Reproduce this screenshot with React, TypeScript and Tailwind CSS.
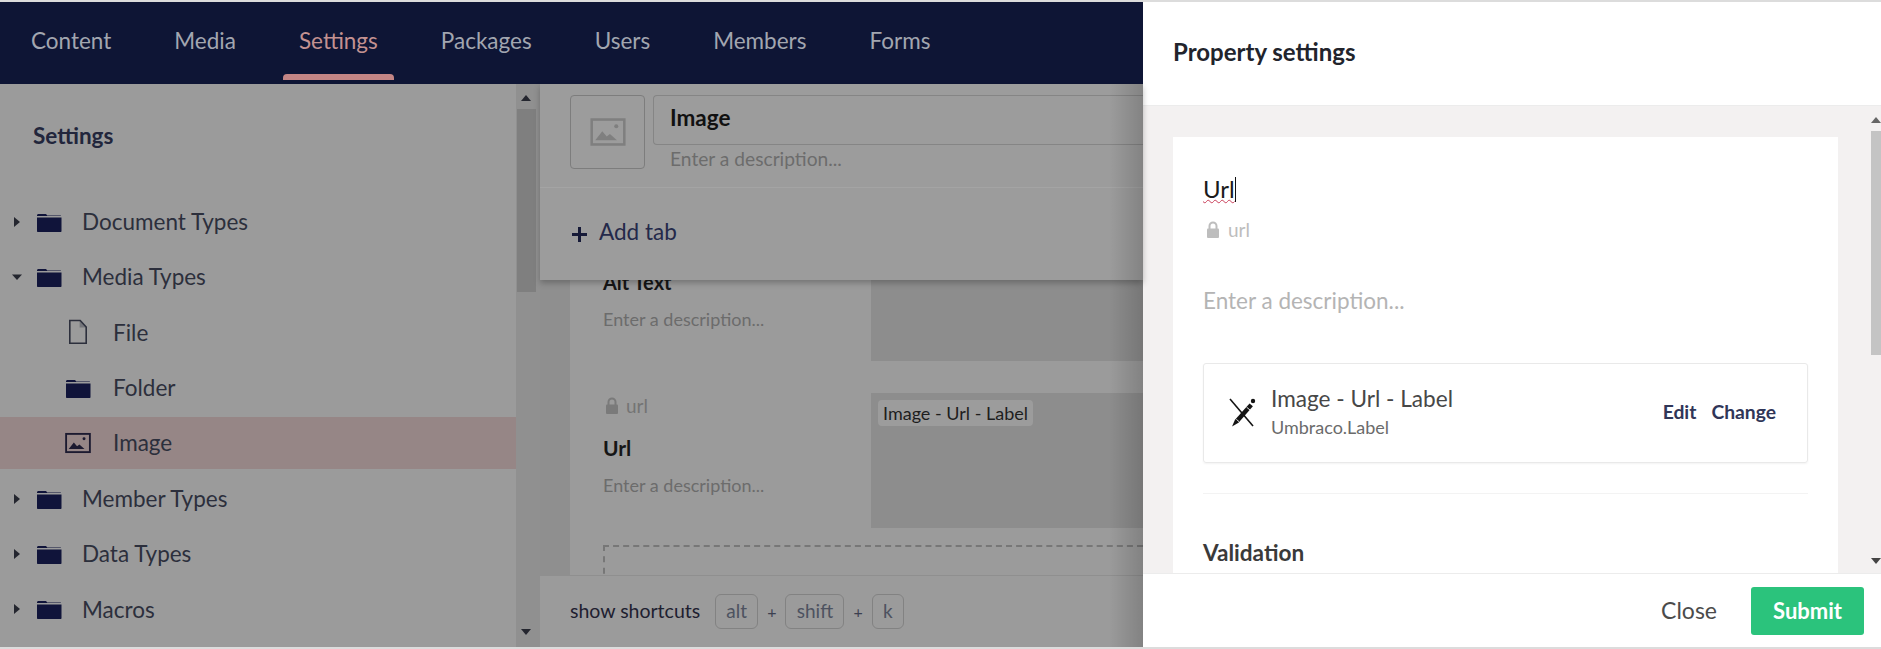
import React from 'react';

const navItems = [
  { label: 'Content', active: false },
  { label: 'Media', active: false },
  { label: 'Settings', active: true },
  { label: 'Packages', active: false },
  { label: 'Users', active: false },
  { label: 'Members', active: false },
  { label: 'Forms', active: false },
];

const FolderIcon = () => (
  <svg width="26" height="24" viewBox="0 0 26 24" className="shrink-0 text-[#10143a]">
    <path fill="currentColor" d="M1 5.5C1 4.7 1.6 4 2.4 4h7c.8 0 1.3.5 1.8 1.5h13.4c.4 0 .4.3.4.6H1z" />
    <path fill="currentColor" d="M1 7.5h24.5V21c0 .6-.4 1-1 1H2c-.6 0-1-.4-1-1z" />
  </svg>
);

const FileIcon = () => (
  <svg width="26" height="26" viewBox="0 0 26 26" className="shrink-0 text-[#2c2f3c]">
    <path fill="none" stroke="currentColor" strokeWidth="1.6" d="M4.8 1.5h10.4l6 6.5v16.2H4.8z" />
    <path fill="currentColor" d="M14.6 1.5l6.6 7h-6.6z" opacity="0.35" />
  </svg>
);

const ImageIcon = ({ className }: { className: string }) => (
  <svg width="28" height="22" viewBox="0 0 28 22" className={className}>
    <rect x="1.2" y="1.2" width="25.6" height="19.6" fill="none" stroke="currentColor" strokeWidth="2" />
    <path fill="currentColor" d="M4 17.5l5.5-7 3.5 4 2.5-2 5.5 5z" />
    <circle cx="20.5" cy="6.5" r="1.6" fill="currentColor" />
  </svg>
);

const LockIcon = ({ className }: { className: string }) => (
  <svg width="14" height="18" viewBox="0 0 14 18" className={className}>
    <path fill="none" stroke="currentColor" strokeWidth="2" d="M3.5 8V5a3.5 3.5 0 0 1 7 0v3" />
    <rect x="1" y="7.5" width="12" height="9.5" rx="1" fill="currentColor" />
  </svg>
);

const Caret = ({ open }: { open?: boolean }) => (
  <svg width="12" height="12" viewBox="0 0 12 12" className="shrink-0 text-[#24262f]">
    {open ? <path fill="currentColor" d="M1 3.5h10L6 9z" /> : <path fill="currentColor" d="M3 1l6 5-6 5z" />}
  </svg>
);

const TreeRow = ({ label, open }: { label: string; open?: boolean }) => (
  <div className="flex h-[55.4px] items-center pl-[11px]">
    <Caret open={open} />
    <span className="ml-[13px]"><FolderIcon /></span>
    <span className="ml-[20px] text-[22.5px] text-[#2c2f3c]">{label}</span>
  </div>
);

const ChildRow = ({ label, icon, active }: { label: string; icon: React.ReactNode; active?: boolean }) => (
  <div className="flex h-[55.4px] items-center">
    <div className={`flex h-[52px] w-full items-center pl-[65px] ${active ? 'bg-[#968686]' : ''}`}>
      <span className="flex w-[26px] justify-center">{icon}</span>
      <span className="ml-[22px] text-[22.5px] text-[#2c2f3c]">{label}</span>
    </div>
  </div>
);

const Kbd = ({ children, width }: { children: string; width: string }) => (
  <span className={`flex h-[35px] items-center justify-center rounded-[6px] border border-[#828282] text-[19px] text-[#4d5260] ${width}`}>
    {children}
  </span>
);

const App: React.FC = () => {
  return (
    <div
      className="flex h-[649px] w-[1881px] flex-col overflow-hidden bg-[#dcdcdc] pt-[2px] pb-[2px]"
      style={{ fontFamily: 'Lato, "Open Sans", sans-serif' }}
    >
      <div className="flex min-h-0 flex-1">
        <div className="flex w-[1143px] shrink-0 flex-col">
          <nav className="relative flex h-[82px] shrink-0 items-center bg-[#0e1535] pb-[4px] pl-[31px]">
            {navItems.map((item) => (
              <div key={item.label} className="relative mr-[63px] flex items-center">
                <span className={`text-[22.5px] ${item.active ? 'text-[#c39191]' : 'text-[#a2a6b0]'}`}>{item.label}</span>
                {item.active && (
                  <span className="absolute top-[50px] -left-[16px] -right-[16px] h-[6px] rounded-t-[4px] bg-[#c38585]" />
                )}
              </div>
            ))}
          </nav>

          <div className="flex min-h-0 flex-1">
            <aside className="flex w-[516px] shrink-0 flex-col bg-[#9b9b9b]">
              <h2 className="mt-[37px] mb-[43px] pl-[33px] text-[22.5px] leading-[30px] font-bold text-[#22263c]">Settings</h2>
              <TreeRow label="Document Types" />
              <TreeRow label="Media Types" open />
              <ChildRow label="File" icon={<FileIcon />} />
              <ChildRow label="Folder" icon={<FolderIcon />} />
              <ChildRow label="Image" active icon={<ImageIcon className="text-[#1c1a30]" />} />
              <TreeRow label="Member Types" />
              <TreeRow label="Data Types" />
              <TreeRow label="Macros" />
            </aside>

            <div className="flex w-[24px] shrink-0 flex-col items-center justify-between bg-[#909090] pt-[11px] pr-[4px] pb-[12px]">
              <div className="flex flex-col items-center gap-[8px]">
                <span className="h-0 w-0 border-x-[5px] border-b-[6px] border-x-transparent border-b-[#24262f]" />
                <span className="h-[183px] w-[19px] bg-[#7f7f7f]" />
              </div>
              <span className="h-0 w-0 border-x-[5px] border-t-[6px] border-x-transparent border-t-[#24262f]" />
            </div>

            <main className="relative flex min-w-0 flex-1 flex-col bg-[#8f8f8f]">
              <header className="z-10 h-[196px] shrink-0 bg-[#9c9c9c] shadow-[0_3px_6px_rgba(0,0,0,0.25)]">
                <div className="flex h-[104px] items-start border-b border-[#a4a4a4] pt-[11px] pl-[30px]">
                  <div className="flex h-[74px] w-[75px] shrink-0 items-center justify-center rounded-[4px] border border-[#7d7d7d]">
                    <ImageIcon className="h-[28px] w-[36px] text-[#7f7f7f]" />
                  </div>
                  <div className="ml-[8px] flex-1">
                    <div className="flex h-[50px] items-center rounded-l-[4px] border border-r-0 border-[#858585] pb-[4px] pl-[16px] text-[22.5px] font-bold text-[#111]">
                      Image
                    </div>
                    <div className="pl-[17px] text-[19.2px] leading-[28px] text-[#6c6c6c]">Enter a description...</div>
                  </div>
                </div>
                <div className="flex h-[91px] items-center pb-[3px] pl-[32px]">
                  <svg width="15" height="15" viewBox="0 0 15 15" className="mt-[5px] text-[#161a38]">
                    <path fill="currentColor" d="M6 0h3v6h6v3H9v6H6V9H0V6h6z" />
                  </svg>
                  <span className="ml-[12px] text-[22.5px] text-[#24294a]">Add tab</span>
                </div>
              </header>

              <div className="min-h-0 flex-1 overflow-hidden pl-[30px]">
                <div className="bg-[#9b9b9b] pl-[33px]">
                  <div className="flex">
                    <div className="w-[268px] shrink-0">
                      <div className="-mt-[10px] text-[20px] leading-[24px] font-bold text-[#161616]">Alt Text</div>
                      <div className="mt-[13px] text-[18px] leading-[24px] text-[#6c6c6c]">Enter a description...</div>
                    </div>
                    <div className="h-[81px] flex-1 bg-[#8d8d8d]" />
                  </div>
                  <div className="mt-[32px] flex">
                    <div className="w-[268px] shrink-0">
                      <div className="flex h-[26px] items-center text-[19px] text-[#747474]">
                        <LockIcon className="ml-[2px] h-[18px] w-[14px] text-[#7a7a7a]" />
                        <span className="ml-[7px]">url</span>
                      </div>
                      <div className="mt-[16px] text-[21px] leading-[26px] font-bold text-[#161616]">Url</div>
                      <div className="mt-[12px] text-[18px] leading-[24px] text-[#6c6c6c]">Enter a description...</div>
                    </div>
                    <div className="h-[135px] flex-1 bg-[#8d8d8d] pt-[7px] pl-[7px]">
                      <span className="inline-block rounded-[4px] bg-[#9c9c9c] px-[5px] text-[18px] leading-[26px] text-[#1e1e1e]">
                        Image - Url - Label
                      </span>
                    </div>
                  </div>
                  <div className="mt-[17px] h-[40px] border-t-[2px] border-l-[2px] border-dashed border-[#777]" />
                </div>
              </div>

              <footer className="z-10 flex h-[72px] shrink-0 items-center border-t border-[#8f8f8f] bg-[#9b9b9b] pl-[30px]">
                <span className="-mt-[2px] text-[19.5px] text-[#1e2030]">show shortcuts</span>
                <span className="ml-[15px] flex items-center gap-[9px] text-[16px] text-[#3c4050]">
                  <Kbd width="w-[43px]">alt</Kbd>+<Kbd width="w-[59px]">shift</Kbd>+<Kbd width="w-[32px]">k</Kbd>
                </span>
              </footer>

              <div className="absolute top-0 right-0 bottom-0 z-20 w-[34px] bg-gradient-to-r from-transparent to-[rgba(0,0,0,0.16)]" />
            </main>
          </div>
        </div>

        <section className="flex min-w-0 flex-1 flex-col bg-white">
          <div className="flex h-[103px] shrink-0 items-center pb-[4px] pl-[30px] text-[24px] font-bold text-[#22242c]">
            Property settings
          </div>
          <div className="flex min-h-0 flex-1 overflow-hidden border-t border-[#ececec] bg-[#f3f1f1]">
            <div className="ml-[30px] mt-[31px] w-[665px] shrink-0 self-stretch bg-white px-[30px] pt-[37px]">
              <div className="relative inline-block text-[24px] leading-[30px] text-[#1b1b1b]">
                <span className="underline decoration-wavy decoration-[#c9405a] decoration-1 underline-offset-1">Url</span>
                <span className="absolute top-[3px] -right-[1px] h-[25px] w-px bg-[#111]" />
              </div>
              <div className="mt-[13px] flex h-[26px] items-center text-[19px] text-[#bdbdbd]">
                <LockIcon className="ml-[3px] h-[18px] w-[14px] text-[#bdbdbd]" />
                <span className="ml-[8px]">url</span>
              </div>
              <div className="mt-[44px] text-[22.5px] leading-[28px] text-[#b4b4b4]">Enter a description...</div>
              <div className="mt-[48px] flex h-[100px] items-center rounded-[3px] border border-[#e9e9e9] shadow-[0_1px_2px_rgba(0,0,0,0.05)] pr-[31px] pl-[24px]">
                <svg width="28" height="32" viewBox="0 0 28 32" className="-mt-[3px] shrink-0 text-[#141414]">
                  <path fill="none" stroke="currentColor" strokeWidth="1.6" d="M2 3l23 27" />
                  <path fill="currentColor" d="M21.5 7.5l3.4 2.8-14.4 16.4-6.5 3.8 3-6.8z" />
                  <path fill="none" stroke="#fff" strokeWidth="0.9" d="M18.6 11.2l3.4 2.8M8.4 23.4l2.6 2.2" />
                  <circle cx="25" cy="5" r="2.2" fill="currentColor" />
                </svg>
                <div className="ml-[15px] flex-1">
                  <div className="-mt-[3px] text-[22.6px] leading-[28px] text-[#474747]">Image - Url - Label</div>
                  <div className="mt-[3px] text-[18px] leading-[22px] text-[#6b6b6b]">Umbraco.Label</div>
                </div>
                <span className="-mt-[2px] text-[19.3px] font-bold text-[#303658]">Edit</span>
                <span className="-mt-[2px] ml-[15px] text-[19.3px] font-bold text-[#303658]">Change</span>
              </div>
              <div className="mt-[30px] h-px bg-[#f3f3f3]" />
              <div className="mt-[45px] text-[22.6px] leading-[28px] font-bold text-[#3a3a3a]">Validation</div>
            </div>
            <div className="ml-[33px] flex flex-1 flex-col items-start justify-between pt-[11px] pb-[9px]">
              <div className="flex flex-col items-center gap-[8px]">
                <span className="h-0 w-0 border-x-[5px] border-b-[6px] border-x-transparent border-b-[#666]" />
                <span className="h-[224px] w-[10px] bg-[#c4c4c4]" />
              </div>
              <span className="h-0 w-0 border-x-[5px] border-t-[6px] border-x-transparent border-t-[#444]" />
            </div>
          </div>
          <div className="flex h-[74px] shrink-0 items-center justify-end border-t border-[#ececec] pr-[17px]">
            <span className="text-[23px] text-[#4b4b4b]">Close</span>
            <button className="ml-[34px] h-[48px] w-[113px] rounded-[3px] bg-[#2bc37c] text-[22px] font-bold text-white">Submit</button>
          </div>
        </section>
      </div>
    </div>
  );
};

export default App;
